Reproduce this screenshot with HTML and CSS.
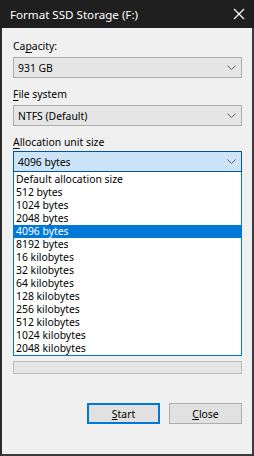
FILE: index.html
```
<!DOCTYPE html>
<html lang="en">
<head>
    <meta charset="UTF-8">
    <title>Format SSD Storage (F:)</title>
    <link rel="stylesheet" href="styles.css">
</head>
<body>
    <div class="window">
        <div class="titlebar">
            <span class="title">Format SSD Storage (F:)</span>
            <svg class="close" width="12" height="12" viewBox="0 0 12 12">
                <path d="M1 1 L11 11 M11 1 L1 11" stroke="#fff" stroke-width="1.2" fill="none"/>
            </svg>
        </div>

        <div class="content">
            <div class="label">Ca<u>p</u>acity:</div>
            <div class="combo">
                <span>931 GB</span>
                <svg class="chev" width="9" height="5" viewBox="0 0 9 5"><path d="M0.5 0.5 L4.5 4.5 L8.5 0.5" stroke="#606060" fill="none"/></svg>
            </div>

            <div class="label"><u>F</u>ile system</div>
            <div class="combo">
                <span>NTFS (Default)</span>
                <svg class="chev" width="9" height="5" viewBox="0 0 9 5"><path d="M0.5 0.5 L4.5 4.5 L8.5 0.5" stroke="#606060" fill="none"/></svg>
            </div>

            <div class="label last"><u>A</u>llocation unit size</div>
            <div class="combo focused">
                <span>4096 bytes</span>
                <svg class="chev" width="9" height="5" viewBox="0 0 9 5"><path d="M0.5 0.5 L4.5 4.5 L8.5 0.5" stroke="#606060" fill="none"/></svg>
            </div>
            <ul class="dropdown">
                <li>Default allocation size</li>
                <li>512 bytes</li>
                <li>1024 bytes</li>
                <li>2048 bytes</li>
                <li class="selected">4096 bytes</li>
                <li>8192 bytes</li>
                <li>16 kilobytes</li>
                <li>32 kilobytes</li>
                <li>64 kilobytes</li>
                <li>128 kilobytes</li>
                <li>256 kilobytes</li>
                <li>512 kilobytes</li>
                <li>1024 kilobytes</li>
                <li>2048 kilobytes</li>
            </ul>

            <div class="progress"></div>

            <div class="buttons">
                <button class="btn default"><u>S</u>tart</button>
                <button class="btn"><u>C</u>lose</button>
            </div>
        </div>
    </div>
</body>
</html>
```

FILE: styles.css
```
body {
    margin: 0;
    font-family: "Noto Sans", "Open Sans", sans-serif;
    font-size: 10.4px;
    color: #000;
}
.window {
    width: 254px;
    height: 456px;
    box-sizing: border-box;
    background-color: #f0f0f0;
    border-left: 2px solid #2b2b2b;
    border-right: 2px solid #3a3a3a;
    border-bottom: 2px solid #3a3a3a;
}
.titlebar {
    height: 28px;
    background-color: #1f1f1f;
    display: flex;
    align-items: center;
    justify-content: space-between;
    margin: 0 -2px;
    padding: 0 9px 0 10px;
}
.title {
    color: #fff;
    font-size: 11.6px;
}
.content {
    padding: 11px 10px 0 11px;
}
.label {
    line-height: 14px;
    margin-bottom: 4px;
}
.label.last {
    margin-bottom: 2px;
}
.label u {
    text-underline-offset: 2px;
}
.combo {
    height: 21px;
    box-sizing: border-box;
    border: 1px solid #adadad;
    background-color: #e5e5e5;
    display: flex;
    align-items: center;
    justify-content: space-between;
    padding: 0 3px 0 4px;
    margin-bottom: 9px;
}
.combo.focused {
    background-color: #cce4f7;
    border-color: #005499;
    margin-bottom: 0;
}
.chev {
    margin-right: 2px;
}
.dropdown {
    list-style: none;
    margin: 0;
    padding: 1px 0 0;
    background: #fff;
    border: 1px solid #0078d7;
    border-top: none;
}
.dropdown li {
    height: 13px;
    line-height: 13px;
    padding-left: 2px;
}
.dropdown li.selected {
    background-color: #0078d7;
    color: #fff;
}
.progress {
    margin-top: 5px;
    height: 13px;
    box-sizing: border-box;
    border: 1px solid #bcbcbc;
    background-color: #e6e6e6;
}
.buttons {
    display: flex;
    justify-content: flex-end;
    gap: 9px;
    margin-top: 29px;
}
.btn {
    width: 73px;
    height: 21px;
    font-family: inherit;
    font-size: 10.4px;
    color: #000;
    background-color: #e1e1e1;
    border: 1px solid #adadad;
    padding: 0;
}
.btn.default {
    border: 2px solid #0078d7;
}
```
